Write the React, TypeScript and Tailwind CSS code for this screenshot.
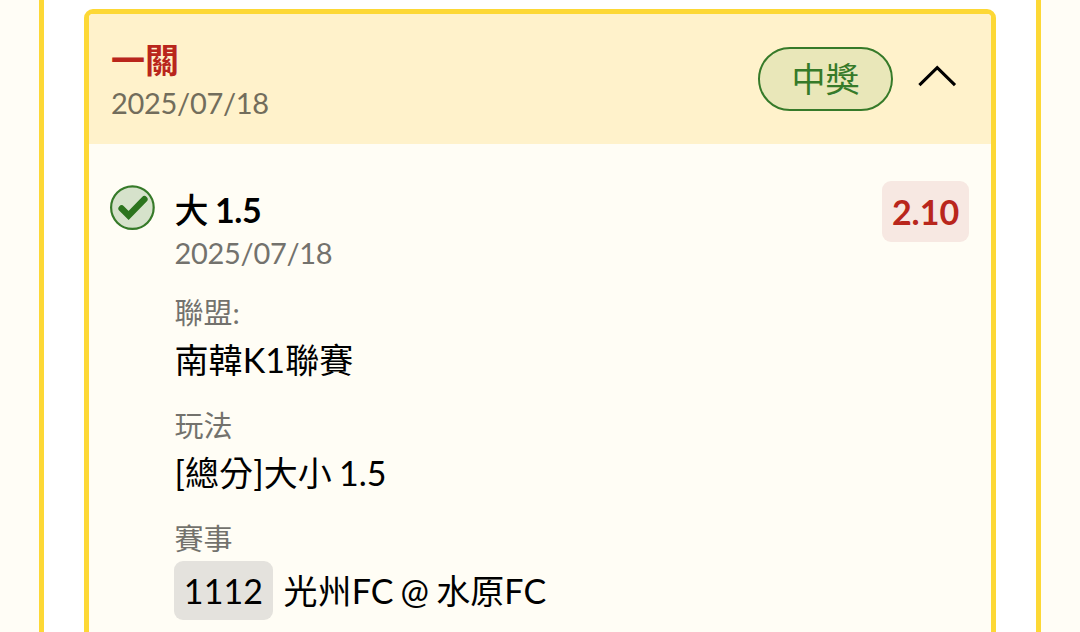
import React, { useState } from 'react';

interface DetailProps {
    label: string;
    children: React.ReactNode;
}

const Detail: React.FC<DetailProps> = ({ label, children }) => (
    <div className="h-[113px]">
        <div className="h-[44px] text-[29px] leading-[44px] text-[#73726d]">{label}</div>
        <div className="flex min-h-[49px] items-center leading-[49px] whitespace-pre tracking-[0.1px] [word-spacing:-1.8px]">{children}</div>
    </div>
);

const CheckBadge: React.FC = () => (
    <svg className="h-[46px] w-[46px] shrink-0" viewBox="0 0 46 46" fill="none">
        <circle cx="23.4" cy="22.6" r="21.3" fill="#d6e2cb" stroke="#367a29" strokeWidth="2.2" />
        <path d="M12.6 23.4l7 7L35.4 14.2" stroke="#2c741e" strokeWidth="6.4" strokeLinecap="round" />
    </svg>
);

const App: React.FC = () => {
    const [open, setOpen] = useState(true);

    return (
        <div className="h-[632px] overflow-hidden bg-[#fffdf6] px-[39px] font-['Lato','Noto_Sans_CJK_TC',sans-serif] text-[34px] text-black">
            <div className="h-full border-x-[5px] border-[#fdd835] bg-white px-[40px] pt-[9px]">
                <div className="h-[660px] overflow-hidden rounded-[9px] border-[5px] border-[#fdd835] bg-[#fffdf5]">
                    <div className="flex h-[130px] items-center justify-between bg-[#fff2cb] pr-[34px] pl-[22px]">
                        <div className="pt-[4px]">
                            <div className="h-[43px] text-[34px] leading-[43px] font-bold text-[#b9261c]">一關</div>
                            <div className="h-[43px] text-[29px] leading-[44px] tracking-[-0.3px] text-[#726d5c]">2025/07/18</div>
                        </div>
                        <div className="flex items-center gap-[24px]">
                            <span className="flex h-[64px] w-[135px] items-center justify-center rounded-full border-2 border-[#367a29] bg-[#e9e7b9] pb-[2px] text-[#367a29]">
                                中獎
                            </span>
                            <button onClick={() => setOpen(!open)}>
                                <svg className="h-[28px] w-[40px]" viewBox="0 0 40 28" fill="none">
                                    <path d="M2.4 20.2L20.2 2.6L38 20.2" stroke="black" strokeWidth="3.1" />
                                </svg>
                            </button>
                        </div>
                    </div>

                    {open && (
                        <div className="flex items-start pt-[37px] pr-[22px] pl-[20px]">
                            <div className="pt-[4px]">
                                <CheckBadge />
                            </div>
                            <div className="flex-1 pl-[19.5px]">
                                <div className="h-[50px] leading-[58px] font-bold tracking-[-0.4px] [word-spacing:-1px]">
                                    <span className="font-medium">大</span> 1.5
                                </div>
                                <div className="h-[60px] text-[29px] leading-[44px] tracking-[-0.3px] text-[#73726d]">2025/07/18</div>
                                <Detail label="聯盟:">南韓K1聯賽</Detail>
                                <Detail label="玩法">[總分]大小 1.5</Detail>
                                <Detail label="賽事">
                                    <span className="-ml-[0.5px] flex h-[59px] w-[99px] shrink-0 items-center justify-center rounded-[9px] bg-[#e4e2dd]">
                                        1112
                                    </span>
                                    <span className="ml-[10.5px] pb-px">光州FC @ 水原FC</span>
                                </Detail>
                            </div>
                            <div className="flex h-[61px] w-[87px] items-center justify-center rounded-[9px] bg-[#f7e8e2] font-bold text-[#b9261c]">
                                2.10
                            </div>
                        </div>
                    )}
                </div>
            </div>
        </div>
    );
};

export default App;
